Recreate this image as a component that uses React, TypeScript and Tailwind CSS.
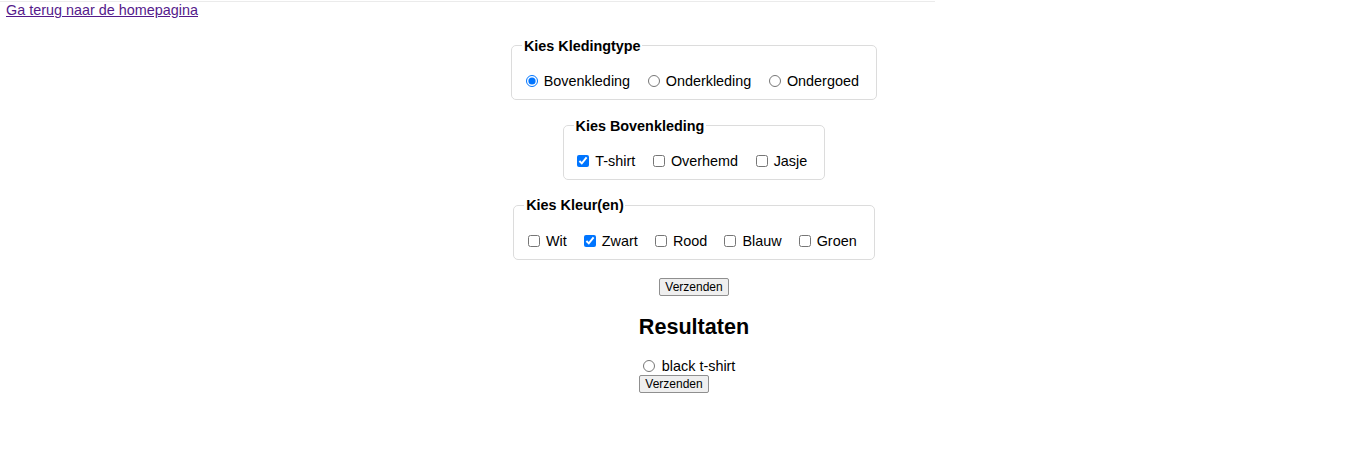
import React, { useState } from "react";

type Option = { value: string; label: string };

const TYPES: Option[] = [
  { value: "boven", label: "Bovenkleding" },
  { value: "onder", label: "Onderkleding" },
  { value: "ondergoed", label: "Ondergoed" },
];

const ITEMS: Option[] = [
  { value: "tshirt", label: "T-shirt" },
  { value: "overhemd", label: "Overhemd" },
  { value: "jasje", label: "Jasje" },
];

const COLORS: Option[] = [
  { value: "wit", label: "Wit" },
  { value: "zwart", label: "Zwart" },
  { value: "rood", label: "Rood" },
  { value: "blauw", label: "Blauw" },
  { value: "groen", label: "Groen" },
];

const Button = ({ children }: { children: React.ReactNode }) => (
  <button
    type="button"
    className="bg-[#efefef] border border-[#8f8f8f] rounded-[2px] px-[5.5px] py-[1px] text-[12px] leading-[14px] text-black"
  >
    {children}
  </button>
);

const Group = ({
  legend,
  className,
  children,
}: {
  legend: string;
  className: string;
  children: React.ReactNode;
}) => (
  <fieldset className={"border border-[#dcdcdc] rounded-[5px] pl-[10px] pr-[17px] pt-[19px] pb-[9.5px] " + className}>
    <legend className="font-bold px-[1.8px]">{legend}</legend>
    <div className="flex items-center gap-[14px]">{children}</div>
  </fieldset>
);

export default function App() {
  const [type, setType] = useState("boven");
  const [items, setItems] = useState<string[]>(["tshirt"]);
  const [colors, setColors] = useState<string[]>(["zwart"]);

  const toggle = (list: string[], set: (v: string[]) => void, v: string) =>
    set(list.includes(v) ? list.filter((x) => x !== v) : [...list, v]);

  return (
    <div className="min-h-[452px] bg-white text-black text-[14.4px] leading-[16.5px] font-['Liberation_Sans',Arial,sans-serif] pt-px">
      <div className="w-[935px] h-px bg-[#ebebeb]" />
      <a href="#" className="block w-fit ml-[6px] text-[#551a8b] underline">
        Ga terug naar de homepagina
      </a>

      <div className="flex flex-col items-center pl-[16px]">
        <Group legend="Kies Kledingtype" className="mt-[19px]">
          {TYPES.map((t) => (
            <label key={t.value} className="flex items-center">
              <input
                type="radio"
                name="type"
                checked={type === t.value}
                onChange={() => setType(t.value)}
                className="m-0 ml-[3.6px] mr-[6px] w-[12px] h-[12px]"
              />
              {t.label}
            </label>
          ))}
        </Group>

        <Group legend="Kies Bovenkleding" className="mt-[17.5px]">
          {ITEMS.map((t) => (
            <label key={t.value} className="flex items-center">
              <input
                type="checkbox"
                checked={items.includes(t.value)}
                onChange={() => toggle(items, setItems, t.value)}
                className="m-0 ml-[3.6px] mr-[6px] w-[12px] h-[12px]"
              />
              {t.label}
            </label>
          ))}
        </Group>

        <Group legend="Kies Kleur(en)" className="mt-[17px]">
          <div className="flex items-center gap-[13.5px]">
            {COLORS.map((t) => (
              <label key={t.value} className="flex items-center">
                <input
                  type="checkbox"
                  checked={colors.includes(t.value)}
                  onChange={() => toggle(colors, setColors, t.value)}
                  className="m-0 ml-[3.6px] mr-[6px] w-[12px] h-[12px]"
                />
                {t.label}
              </label>
            ))}
          </div>
        </Group>

        <div className="mt-[18.5px]">
          <Button>Verzenden</Button>
        </div>

        <div className="flex flex-col items-start">
          <h2 className="text-[21.6px] leading-[25px] font-bold mt-[18px] mb-[19px]">Resultaten</h2>
          <label className="flex items-center">
            <input type="radio" name="result" className="m-0 ml-[4.5px] mr-[6.5px] w-[12px] h-[12px]" />
            black t-shirt
          </label>
          <Button>Verzenden</Button>
        </div>
      </div>
    </div>
  );
}
